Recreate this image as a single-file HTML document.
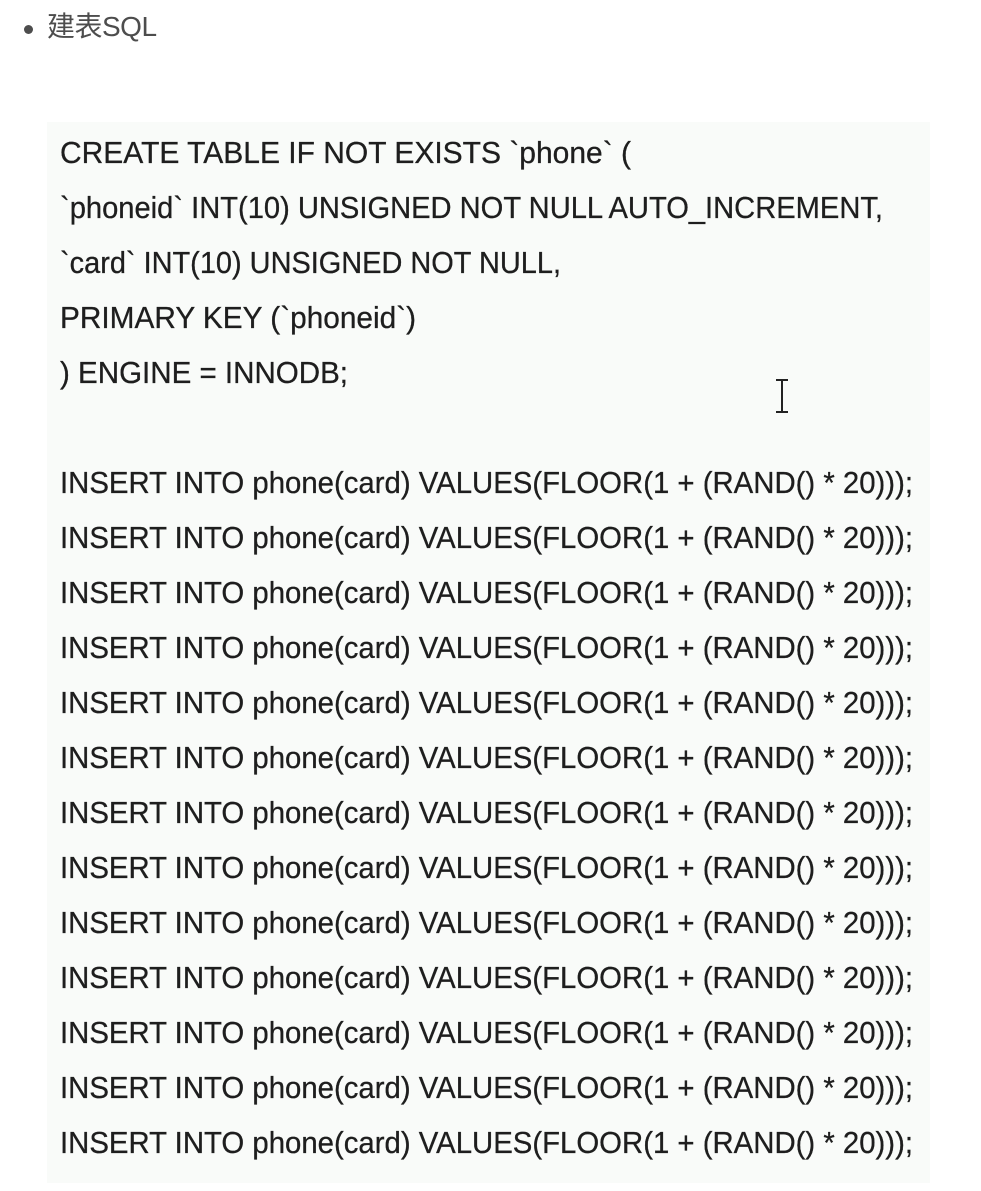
<!DOCTYPE html>
<html><head><meta charset="utf-8"><style>
html,body{margin:0;padding:0;background:#fff;width:981px;height:1191px;overflow:hidden}
.h{position:absolute;left:47px;top:9px;font:28px "Liberation Sans","Noto Sans CJK SC",sans-serif;color:#4d4d4d;line-height:36px;letter-spacing:-0.5px}
.dot{position:absolute;left:24px;top:25px;width:9px;height:9px;border-radius:50%;background:#4d4d4d}
svg{position:absolute;left:0;top:0}
text{font-family:"Liberation Sans",Arial,sans-serif;font-size:31px;fill:#1e1e1e;stroke:#1e1e1e;stroke-width:0.3}
</style></head><body>
<div class="dot"></div>
<div class="h">建表SQL</div>
<svg width="981" height="1191">
<rect x="47" y="122" width="883" height="1061" fill="#f9fbf9"/>
<text x="60" y="163" textLength="571" lengthAdjust="spacingAndGlyphs">CREATE TABLE IF NOT EXISTS `phone` (</text>
<text x="60" y="218" textLength="823" lengthAdjust="spacingAndGlyphs">`phoneid` INT(10) UNSIGNED NOT NULL AUTO_INCREMENT,</text>
<text x="60" y="273" textLength="501" lengthAdjust="spacingAndGlyphs">`card` INT(10) UNSIGNED NOT NULL,</text>
<text x="60" y="328" textLength="356" lengthAdjust="spacingAndGlyphs">PRIMARY KEY (`phoneid`)</text>
<text x="60" y="383" textLength="288" lengthAdjust="spacingAndGlyphs">) ENGINE = INNODB;</text>
<g>
<text x="60" y="493" textLength="853" lengthAdjust="spacingAndGlyphs">INSERT INTO phone(card) VALUES(FLOOR(1 + (RAND() * 20)));</text>
<text x="60" y="548" textLength="853" lengthAdjust="spacingAndGlyphs">INSERT INTO phone(card) VALUES(FLOOR(1 + (RAND() * 20)));</text>
<text x="60" y="603" textLength="853" lengthAdjust="spacingAndGlyphs">INSERT INTO phone(card) VALUES(FLOOR(1 + (RAND() * 20)));</text>
<text x="60" y="658" textLength="853" lengthAdjust="spacingAndGlyphs">INSERT INTO phone(card) VALUES(FLOOR(1 + (RAND() * 20)));</text>
<text x="60" y="713" textLength="853" lengthAdjust="spacingAndGlyphs">INSERT INTO phone(card) VALUES(FLOOR(1 + (RAND() * 20)));</text>
<text x="60" y="768" textLength="853" lengthAdjust="spacingAndGlyphs">INSERT INTO phone(card) VALUES(FLOOR(1 + (RAND() * 20)));</text>
<text x="60" y="823" textLength="853" lengthAdjust="spacingAndGlyphs">INSERT INTO phone(card) VALUES(FLOOR(1 + (RAND() * 20)));</text>
<text x="60" y="878" textLength="853" lengthAdjust="spacingAndGlyphs">INSERT INTO phone(card) VALUES(FLOOR(1 + (RAND() * 20)));</text>
<text x="60" y="933" textLength="853" lengthAdjust="spacingAndGlyphs">INSERT INTO phone(card) VALUES(FLOOR(1 + (RAND() * 20)));</text>
<text x="60" y="988" textLength="853" lengthAdjust="spacingAndGlyphs">INSERT INTO phone(card) VALUES(FLOOR(1 + (RAND() * 20)));</text>
<text x="60" y="1043" textLength="853" lengthAdjust="spacingAndGlyphs">INSERT INTO phone(card) VALUES(FLOOR(1 + (RAND() * 20)));</text>
<text x="60" y="1098" textLength="853" lengthAdjust="spacingAndGlyphs">INSERT INTO phone(card) VALUES(FLOOR(1 + (RAND() * 20)));</text>
<text x="60" y="1153" textLength="853" lengthAdjust="spacingAndGlyphs">INSERT INTO phone(card) VALUES(FLOOR(1 + (RAND() * 20)));</text>
</g>
<path d="M776 380h12M782 380v32M776 412h12" stroke="#222" stroke-width="2" fill="none"/>
</svg>
</body></html>
